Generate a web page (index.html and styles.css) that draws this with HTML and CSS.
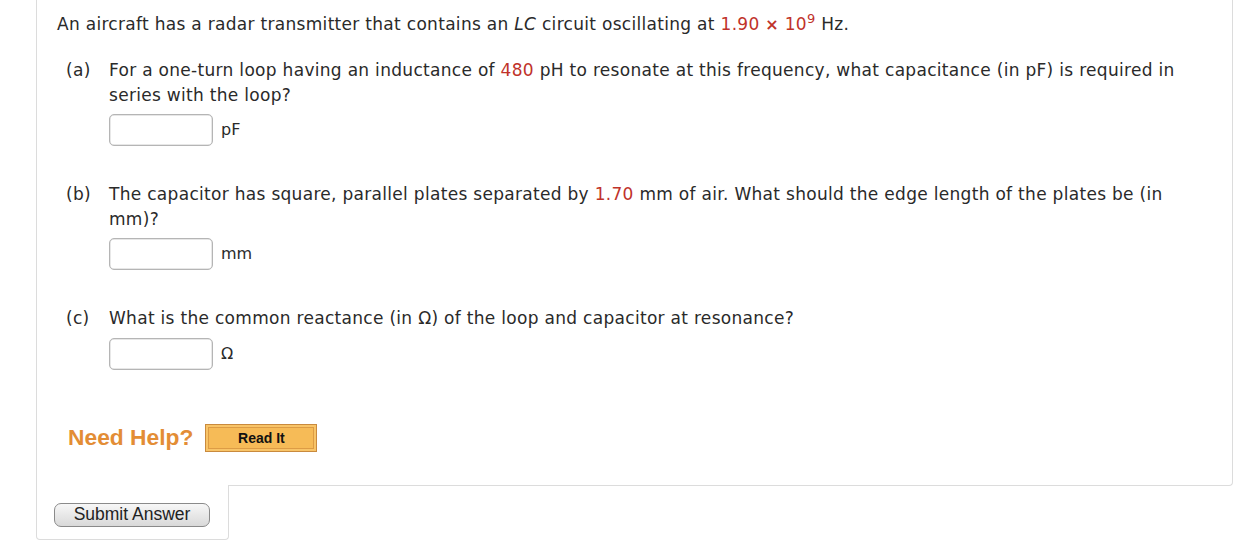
FILE: index.html
```html
<!DOCTYPE html>
<html>
<head>
<meta charset="utf-8">
<link rel="stylesheet" href="styles.css">
</head>
<body>
<div class="page">
  <div class="panel">
    <p class="question">An aircraft has a radar transmitter that contains an <i>LC</i> circuit oscillating at <span class="num">1.90 <b class="times">×</b> 10<sup>9</sup></span> Hz.</p>

    <div class="part">
      <div class="label">(a)</div>
      <div class="body">
        <p class="ptext">For a one-turn loop having an inductance of <span class="num">480</span> pH to resonate at this frequency, what capacitance (in pF) is required in series with the loop?</p>
        <div class="answer"><input class="box" type="text"><span class="unit">pF</span></div>
      </div>
    </div>

    <div class="part">
      <div class="label">(b)</div>
      <div class="body">
        <p class="ptext">The capacitor has square, parallel plates separated by <span class="num">1.70</span> mm of air. What should the edge length of the plates be (in mm)?</p>
        <div class="answer"><input class="box" type="text"><span class="unit">mm</span></div>
      </div>
    </div>

    <div class="part">
      <div class="label">(c)</div>
      <div class="body">
        <p class="ptext">What is the common reactance (in Ω) of the loop and capacitor at resonance?</p>
        <div class="answer"><input class="box" type="text"><span class="unit">Ω</span></div>
      </div>
    </div>

    <div class="help">
      <span class="need">Need Help?</span>
      <button class="readit"><span class="readit-inner">Read It</span></button>
    </div>
  </div>
  <div class="submit-tab">
    <button class="submit">Submit Answer</button>
  </div>
</div>
</body>
</html>
```

FILE: styles.css
```css
html, body {
  margin: 0;
  padding: 0;
  background: #ffffff;
}

.page {
  padding-left: 36px;
  width: 1197px;
  font-family: "DejaVu Sans", Verdana, sans-serif;
  font-size: 17px;
  letter-spacing: 0.3px;
  color: #2a2a2a;
}

.panel {
  border: 1px solid #dcdcdc;
  border-top: none;
  border-bottom-right-radius: 4px;
  padding: 12px 20px 33px 20px;
}

.question {
  margin: 0;
  line-height: 24px;
}

.num {
  color: #c0322a;
}

.times {
  font-weight: bold;
  font-size: 16px;
}

sup {
  font-size: 13px;
  line-height: 0;
  vertical-align: 7px;
}

.part {
  display: grid;
  grid-template-columns: 43px 1fr;
  margin-left: 9px;
  margin-top: 21px;
}

.part + .part {
  margin-top: 36px;
}

.label,
.ptext {
  line-height: 24.5px;
  margin: 0;
}

.answer {
  display: flex;
  align-items: center;
  gap: 8px;
  margin-top: 7px;
}

.box {
  box-sizing: border-box;
  width: 104px;
  height: 32px;
  margin: 0;
  border: 1px solid #b5b5b5;
  border-radius: 5px;
  background: #fff;
  box-shadow: inset 0 0 0 0.5px #d0d0d0;
}

.unit {
  font-size: 16px;
  letter-spacing: 0;
  line-height: 20px;
}

.help {
  display: flex;
  align-items: center;
  gap: 12px;
  margin-top: 54px;
  margin-left: 11px;
}

.need {
  font-family: "Liberation Sans", Arial, sans-serif;
  font-weight: bold;
  font-size: 22.8px;
  letter-spacing: 0;
  color: #e38d35;
}

.readit {
  box-sizing: border-box;
  width: 112px;
  height: 28px;
  padding: 2px;
  margin: 0;
  border: 1px solid #c98a3e;
  background: #f8c468;
  cursor: pointer;
}

.readit-inner {
  display: flex;
  align-items: center;
  justify-content: center;
  box-sizing: border-box;
  height: 100%;
  border: 1px solid #dd9c45;
  background: #f6bb57;
  font-family: "Liberation Sans", Arial, sans-serif;
  font-weight: bold;
  font-size: 14px;
  letter-spacing: 0;
  color: #111;
}

.submit-tab {
  box-sizing: border-box;
  width: 193px;
  margin-top: -1px;
  background: #fff;
  border: 1px solid #dcdcdc;
  border-top: none;
  border-radius: 0 0 4px 4px;
  padding: 18px 17px 12px 17px;
}

.submit {
  box-sizing: border-box;
  width: 156px;
  height: 24px;
  margin: 0;
  padding: 0;
  border: 1px solid #8a8a8a;
  border-radius: 7px;
  background: linear-gradient(#f7f7f7, #d9d9d9);
  font-family: "Liberation Sans", Arial, sans-serif;
  font-size: 17.5px;
  letter-spacing: 0;
  color: #222;
  display: block;
}
```
